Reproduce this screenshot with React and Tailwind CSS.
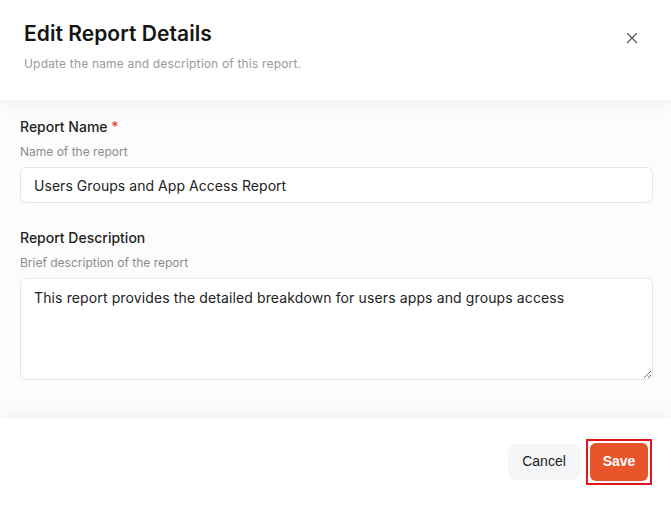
import { X } from 'lucide-react'

export default function App() {
  return (
    <div
      className="flex h-[505px] w-full flex-col bg-white text-[#1c1c1c]"
      style={{ fontFamily: 'Inter, "Noto Sans", sans-serif' }}
    >
      <div className="relative z-10 flex items-start justify-between bg-white pb-7 pl-6 pr-[30px] pt-5 shadow-[0_6px_14px_rgba(0,0,0,0.045)]">
        <div>
          <h1 className="text-[21px] font-semibold leading-7 tracking-[0.05px] text-[#151515]">Edit Report Details</h1>
          <p className="mt-2 text-[12px] leading-4 tracking-[0.18px] text-[#9a9a9a]">Update the name and description of this report.</p>
        </div>
        <button type="button" className="mt-[9px] text-[#555]">
          <X size={18} strokeWidth={1.6} />
        </button>
      </div>

      <div className="flex-1 bg-[#fcfcfc] px-5 pt-[17px]">
        <label className="block text-[14px] font-medium leading-5 text-[#1f1f1f]">
          Report Name <span className="text-[#ef4444]">*</span>
        </label>
        <p className="mt-[7px] text-[12px] leading-4 text-[#8c8c8c]">Name of the report</p>
        <input
          type="text"
          defaultValue="Users Groups and App Access Report"
          className="mt-[7px] block h-9 w-[633px] rounded-md border border-[#e6e6e6] bg-white px-[13px] text-[14px] tracking-[0.05px] text-[#222] outline-none"
        />

        <label className="mt-[25px] block text-[14px] font-medium leading-5 text-[#1f1f1f]">Report Description</label>
        <p className="mt-[7px] text-[12px] leading-4 text-[#8c8c8c]">Brief description of the report</p>
        <textarea
          defaultValue="This report provides the detailed breakdown for users apps and groups access"
          className="mt-[7px] block h-[102px] w-[633px] rounded-md border border-[#e6e6e6] bg-white px-[13px] py-[9px] text-[14px] leading-5 tracking-[0.12px] text-[#222] outline-none"
        />
      </div>

      <div className="relative z-10 flex h-[87px] items-center justify-end gap-[6px] bg-white pr-[19px] shadow-[0_-6px_14px_rgba(0,0,0,0.035)]">
        <button
          type="button"
          className="h-9 w-[72px] rounded-lg bg-[#f5f6f8] text-[14px] text-[#1d1d1d]"
          style={{ fontFamily: '"Liberation Sans", Arial, sans-serif' }}
        >
          Cancel
        </button>
        <div className="border-2 border-[#e0161b] p-[2px]">
          <button
            type="button"
            className="h-[38px] w-[58px] rounded-md bg-[#e8552a] text-[14px] font-bold text-white"
            style={{ fontFamily: '"Liberation Sans", Arial, sans-serif' }}
          >
            Save
          </button>
        </div>
      </div>
    </div>
  )
}
